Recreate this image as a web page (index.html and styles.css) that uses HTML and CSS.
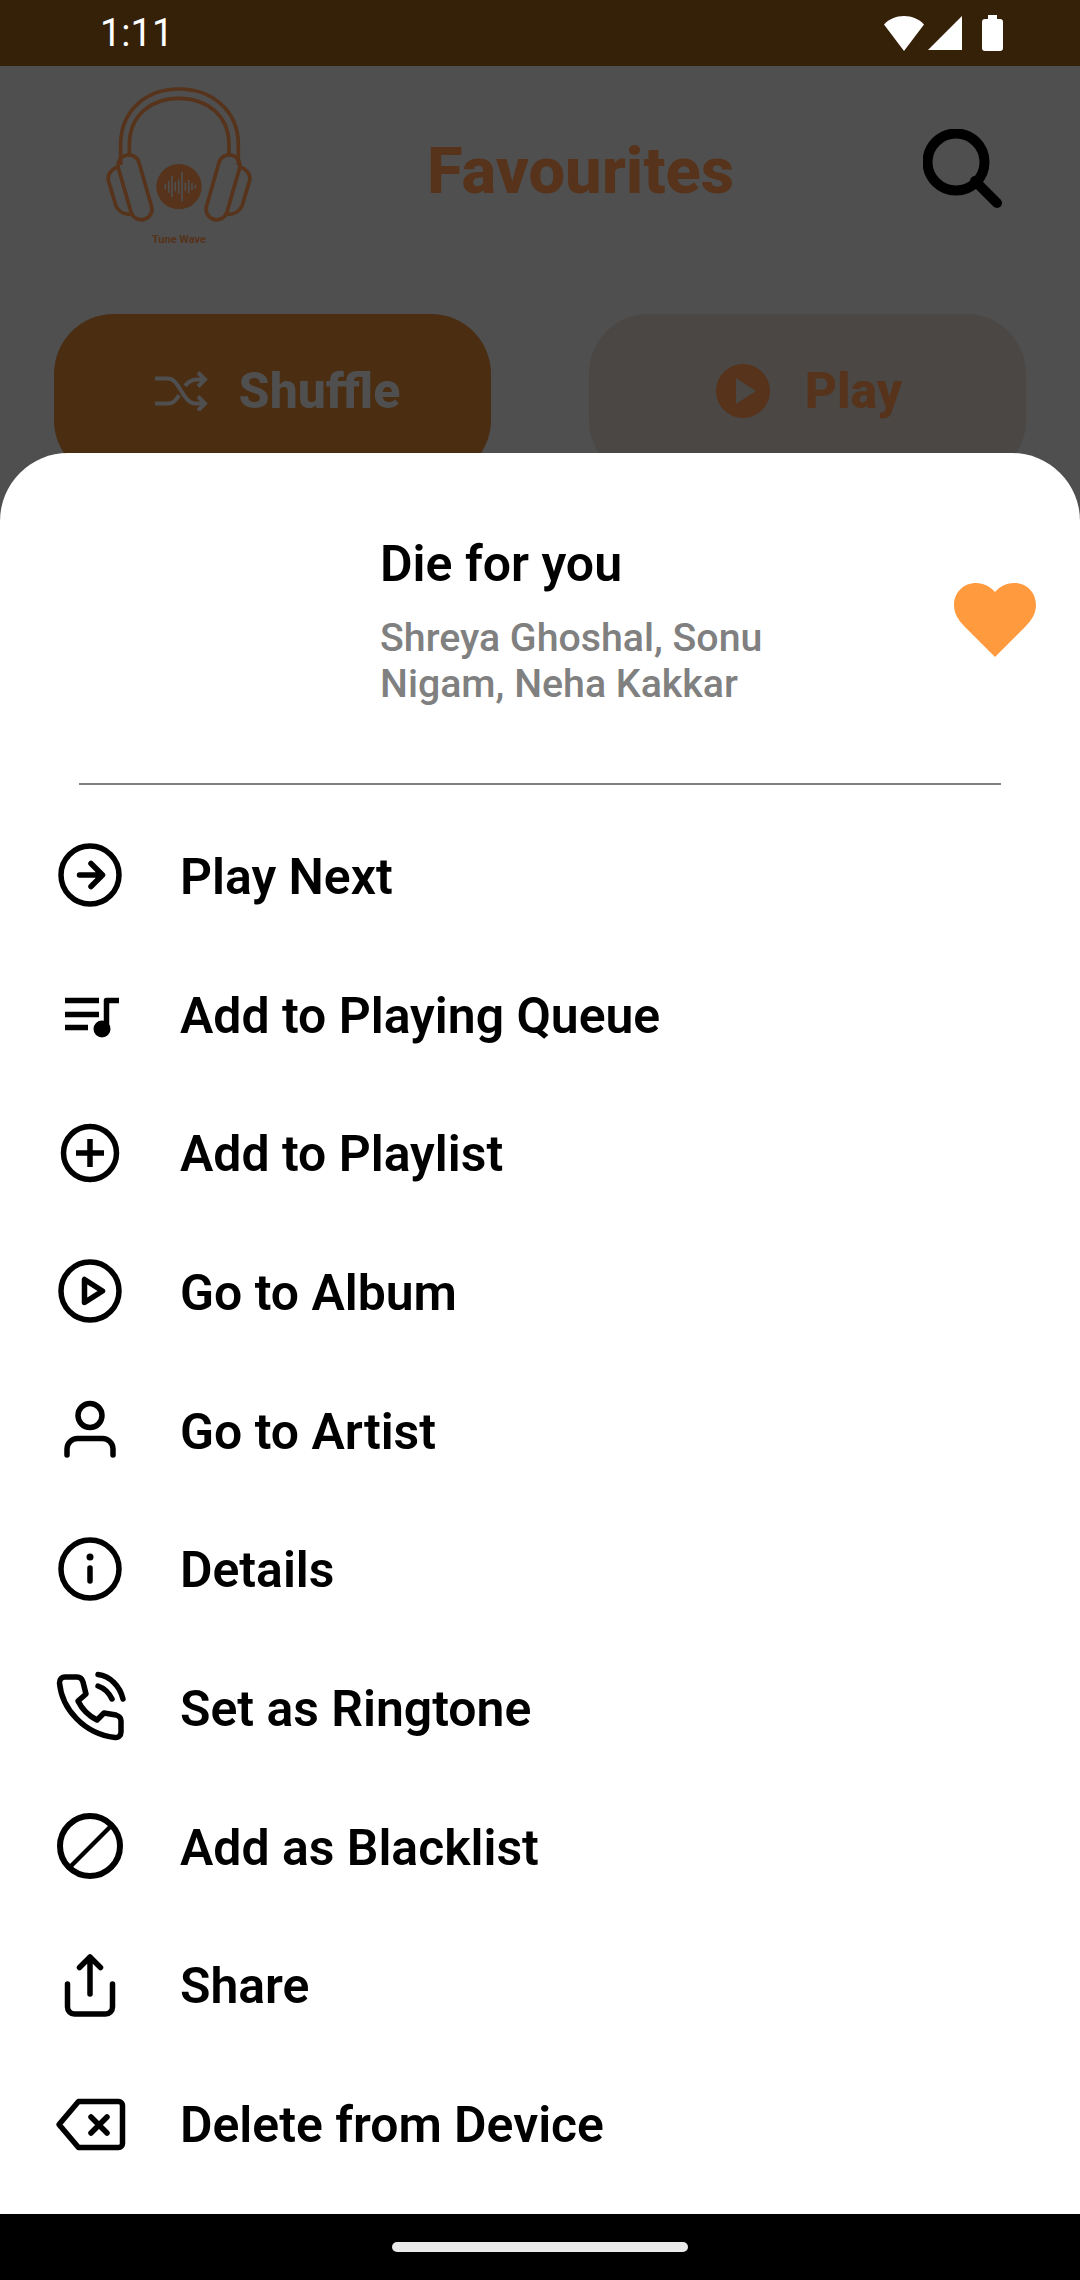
FILE: index.html
```html
<!DOCTYPE html>
<html lang="en">

<head>
    <meta charset="UTF-8" />
    <meta name="viewport" content="width=device-width, initial-scale=1.0" />
    <title>Favourites</title>
    <link rel="stylesheet" href="styles.css">
</head>

<body>
    <div class="screen">
        <div class="status-bar">
            <span class="time">1:11</span>
            <div class="status-icons">
                <svg class="wifi" viewBox="0 0 42 36"><path d="M21 36 1 9.500C6 4 13 1 21 1S36 4 41 9.500z" /></svg>
                <svg class="signal" viewBox="0 0 34 34"><path d="M34 0v34H0z" /></svg>
                <svg class="battery" viewBox="0 0 21 36"><path d="M6 0h9v4h3a3 3 0 0 1 3 3v26a3 3 0 0 1-3 3H3a3 3 0 0 1-3-3V7a3 3 0 0 1 3-3h3z" /></svg>
            </div>
        </div>

        <main class="main">
            <header class="top-bar">
                <svg class="logo" viewBox="0 0 600 570">
                    <g fill="none" stroke="#56331a" stroke-width="11">
                        <path d="M122 285V225C122 120 200 57 297 57S475 120 475 225V285" />
                        <path d="M148 258V225C148 135 215 85 297 85S447 135 447 225V258" />
                        <rect x="133" y="252" width="64" height="200" rx="32" transform="rotate(-16 165 352)" />
                        <rect x="397" y="252" width="64" height="200" rx="32" transform="rotate(16 429 352)" />
                        <path d="M118 290C95 295 78 315 87 338L107 405C114 425 135 435 160 433" />
                        <path d="M476 290C499 295 516 315 507 338L487 405C480 425 459 435 434 433" />
                    </g>
                    <circle cx="297" cy="350" r="68" fill="#56331a" />
                    <path class="wave" d="M256 342v16M266 332v36M276 318v64M286 336v28M296 328v44M306 306v88M316 338v24M326 330v40M336 340v20M346 344v12" />
                    <text class="logo-text" x="297" y="518" text-anchor="middle">Tune Wave</text>
                </svg>
                <h1 class="page-title">Favourites</h1>
                <svg class="search" viewBox="0 0 80 80">
                    <circle cx="33" cy="33" r="28.500" fill="none" stroke="#000" stroke-width="10" />
                    <path d="M52 52 74 74" stroke="#000" stroke-width="10" stroke-linecap="round" />
                </svg>
            </header>

            <div class="actions">
                <button class="action shuffle">
                    <svg class="shuffle-icon" viewBox="0 0 53 40">
                        <path d="M0 7.500H13C25 7.500 27 32.500 41 32.500H51M0 32.500H13C19 32.500 22 28 24 24M30 15C33 11 37 8.500 42 8.500H51M43 1.500 50 8.500 43 15.500M43 25.500 50 32.500 43 39.500" />
                    </svg>
                    Shuffle
                </button>
                <button class="action play">
                    <svg class="play-icon" viewBox="0 0 54 54">
                        <circle cx="27" cy="27" r="27" fill="#56331a" />
                        <path d="M20 14 40 27 20 40z" fill="#4b4744" />
                    </svg>
                    Play
                </button>
            </div>

            <section class="sheet">
                <div class="song">
                    <div class="song-text">
                        <div class="song-title">Die for you</div>
                        <div class="song-artists">Shreya Ghoshal, Sonu<br>Nigam, Neha Kakkar</div>
                    </div>
                    <svg class="heart" viewBox="0 0 82 74"><path d="M41 74 11 44C4 37 0 30 0 22 0 9 10 0 22 0 30 0 36 3.500 41 9 46 3.500 52 0 60 0 72 0 82 9 82 22 82 30 78 37 71 44z" /></svg>
                </div>
                <hr class="divider">
                <ul class="menu">
                    <li class="menu-item">
                        <svg class="menu-icon" viewBox="0 0 72 72">
                            <circle cx="36" cy="36" r="29" />
                            <path d="M25.500 36H48M37 24.500 48.500 36 37 47.500" />
                        </svg>
                        <span class="menu-label">Play Next</span>
                    </li>
                    <li class="menu-item">
                        <svg class="menu-icon" viewBox="0 0 72 72">
                            <path class="flat" d="M11 22.500H45M11 36.500H45M11 49.500H34M52.500 51V22.500H65" />
                            <circle class="solid" cx="48" cy="51" r="8.500" />
                        </svg>
                        <span class="menu-label">Add to Playing Queue</span>
                    </li>
                    <li class="menu-item">
                        <svg class="menu-icon" viewBox="0 0 72 72">
                            <circle cx="36" cy="36" r="26.500" />
                            <path class="flat" d="M22 36H50M36 22V50" />
                        </svg>
                        <span class="menu-label">Add to Playlist</span>
                    </li>
                    <li class="menu-item">
                        <svg class="menu-icon" viewBox="0 0 72 72">
                            <circle cx="36" cy="36" r="29" />
                            <path d="M30.500 24.500V47.500L48.500 36z" />
                        </svg>
                        <span class="menu-label">Go to Album</span>
                    </li>
                    <li class="menu-item">
                        <svg class="menu-icon" viewBox="0 0 72 72">
                            <circle cx="36" cy="21.500" r="12" />
                            <path d="M13 61V55A10.500 10.500 0 0 1 23.500 44.500H48.500A10.500 10.500 0 0 1 59 55V61" />
                        </svg>
                        <span class="menu-label">Go to Artist</span>
                    </li>
                    <li class="menu-item">
                        <svg class="menu-icon" viewBox="0 0 72 72">
                            <circle cx="36" cy="36" r="29" />
                            <path d="M36 35V48" />
                            <circle class="solid" cx="36" cy="24" r="3.500" />
                        </svg>
                        <span class="menu-label">Details</span>
                    </li>
                    <li class="menu-item">
                        <svg class="menu-icon" viewBox="0 0 72 72">
                            <path d="M11 6H23C26 6 28 7.500 29 11L32 23 24 30C28 38 35 45 43 49L50 42 62 44C65 45 67 47 67 50V61C67 65 64 67 61 66.500 30 63 8 38 5.500 12 5.500 8 8 6 11 6z" />
                            <path d="M44 3.500C56 5 66 15 69 28M44 15C50 17 55 22 58 28" />
                        </svg>
                        <span class="menu-label">Set as Ringtone</span>
                    </li>
                    <li class="menu-item">
                        <svg class="menu-icon" viewBox="0 0 72 72">
                            <circle class="thick" cx="36" cy="36" r="30" />
                            <path class="flat thin" d="M16 57 57 16" />
                        </svg>
                        <span class="menu-label">Add as Blacklist</span>
                    </li>
                    <li class="menu-item">
                        <svg class="menu-icon" viewBox="0 0 72 72">
                            <path d="M36 8V45M25.500 18.500 36 8 46.500 18.500" />
                            <path d="M13.500 35V58A7 7 0 0 0 20.500 65H51.500A7 7 0 0 0 58.500 58V35" />
                        </svg>
                        <span class="menu-label">Share</span>
                    </li>
                    <li class="menu-item">
                        <svg class="menu-icon" viewBox="0 0 72 72">
                            <path d="M5 36.500 24.500 13.500H64.500A4 4 0 0 1 68.500 17.500V55.500A4 4 0 0 1 64.500 59.500H24.500z" />
                            <path d="M37 29 53 45M53 29 37 45" />
                        </svg>
                        <span class="menu-label">Delete from Device</span>
                    </li>
                </ul>
            </section>
        </main>

        <div class="nav-bar"><span class="nav-handle"></span></div>
    </div>
</body>

</html>
```

FILE: styles.css
```css
* {
    box-sizing: border-box;
}

body {
    margin: 0;
    font-family: Roboto, "Liberation Sans", sans-serif;
    background: #000;
}

.screen {
    width: 1080px;
    height: 2280px;
    display: flex;
    flex-direction: column;
    overflow: hidden;
}

.status-bar {
    height: 66px;
    padding: 0 77px 0 100px;
    display: flex;
    align-items: center;
    justify-content: space-between;
    background: #352008;
    color: #fff;
}

.time {
    font-size: 38px;
    line-height: 66px;
}

.status-icons {
    display: flex;
    align-items: center;
    fill: #fff;
}

.wifi {
    width: 42px;
    height: 36px;
}

.signal {
    width: 34px;
    height: 34px;
    margin-left: 3px;
}

.battery {
    width: 21px;
    height: 36px;
    margin-left: 20px;
}

.main {
    flex: 1;
    position: relative;
    background: #4f4f4f;
}

.top-bar {
    height: 190px;
    margin-top: 4px;
    padding: 0 77px 0 80px;
    display: flex;
    align-items: center;
}

.logo {
    width: 200px;
    height: 190px;
}

.wave {
    fill: none;
    stroke: #4f4f4f;
    stroke-width: 5;
}

.logo-text {
    font-size: 33px;
    font-weight: 700;
    fill: #56331a;
}

.page-title {
    margin: 12px 0 0 147px;
    flex: 1;
    font-size: 65px;
    font-weight: 800;
    color: #56331a;
}

.search {
    width: 80px;
    height: 80px;
    margin-top: 7px;
}

.actions {
    margin-top: 54px;
    padding: 0 54px;
    display: flex;
    justify-content: space-between;
}

.action {
    width: 437px;
    height: 166px;
    padding: 0 0 12px;
    border: 0;
    border-radius: 60px;
    display: flex;
    align-items: center;
    justify-content: center;
    font-family: inherit;
    font-size: 50px;
    font-weight: 800;
}

.shuffle {
    padding-left: 10px;
    background: #4b2d12;
    color: #4f4f4f;
}

.play {
    padding-left: 3px;
    background: #4b4744;
    color: #56331a;
}

.shuffle-icon {
    width: 53px;
    height: 40px;
    margin-right: 31px;
    fill: none;
    stroke: #4f4f4f;
    stroke-width: 4;
}

.play-icon {
    width: 54px;
    height: 54px;
    margin-right: 35px;
}

.sheet {
    position: absolute;
    left: 0;
    right: 0;
    top: 387px;
    bottom: 0;
    background: #fff;
    border-radius: 68px 68px 0 0;
}

.song {
    height: 330px;
    padding: 82px 44px 0 380px;
    display: flex;
    justify-content: space-between;
}

.song-title {
    font-size: 50px;
    line-height: 58px;
    font-weight: 600;
    color: #000;
}

.song-artists {
    margin-top: 23px;
    font-size: 39.300px;
    line-height: 45.500px;
    font-weight: 500;
    color: #808080;
}

.heart {
    width: 82px;
    height: 74px;
    margin-top: 48px;
    fill: #ff9a3e;
}

.divider {
    margin: 0 79px;
    height: 2px;
    border: 0;
    background: #808080;
}

.menu {
    margin: 21px 0 0;
    padding: 0;
    list-style: none;
}

.menu-item {
    height: 138.700px;
    padding-left: 54px;
    display: flex;
    align-items: center;
    font-size: 49.900px;
    font-weight: 600;
    color: #000;
}

.menu-label {
    padding-top: 3px;
}

.menu-icon {
    width: 72px;
    height: 72px;
    margin-right: 54px;
    fill: none;
    stroke: #000;
    stroke-width: 5.500;
    stroke-linecap: round;
    stroke-linejoin: round;
}

.menu-icon .flat {
    stroke-linecap: butt;
}

.menu-icon .thin {
    stroke-width: 4.500;
}

.menu-icon .thick {
    stroke-width: 6;
}

.menu-icon .solid {
    fill: #000;
    stroke: none;
}

.nav-bar {
    height: 66px;
    padding-top: 28px;
    display: flex;
    justify-content: center;
    align-items: flex-start;
    background: #000;
}

.nav-handle {
    width: 296px;
    height: 10px;
    border-radius: 5px;
    background: #eaeaea;
}
```
